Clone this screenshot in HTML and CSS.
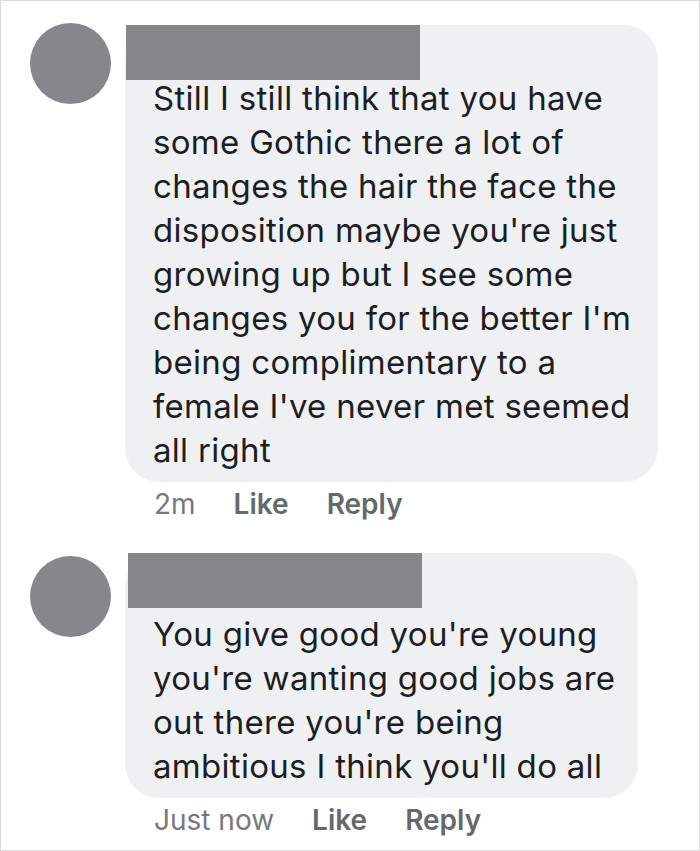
FILE: index.html
```html
<!DOCTYPE html>
<html lang="en">
<head>
    <meta charset="UTF-8">
    <meta name="viewport" content="width=device-width, initial-scale=1.0">
    <title>Comments</title>
    <link rel="stylesheet" href="styles.css">
</head>
<body>
    <div class="page">
        <div class="comment comment-first">
            <div class="avatar"></div>
            <div class="comment-body">
                <div class="bubble">
                    <div class="redact"></div>
                    <p class="text">Still I still think that you have some Gothic there a lot of changes the hair the face the disposition maybe you're just growing up but I see some changes you for the better I'm being complimentary to a female I've never met seemed all right</p>
                </div>
                <div class="actions">
                    <span class="time">2m</span>
                    <span class="link">Like</span>
                    <span class="link">Reply</span>
                </div>
            </div>
        </div>

        <div class="comment comment-second">
            <div class="avatar"></div>
            <div class="comment-body">
                <div class="bubble">
                    <div class="redact"></div>
                    <p class="text">You give good you're young you're wanting good jobs are out there you're being ambitious I think you'll do all</p>
                </div>
                <div class="actions">
                    <span class="time">Just now</span>
                    <span class="link">Like</span>
                    <span class="link">Reply</span>
                </div>
            </div>
        </div>
    </div>
</body>
</html>
```

FILE: styles.css
```css
body {
    margin: 0;
    background-color: #ffffff;
    font-family: Inter, "Liberation Sans", Arial, sans-serif;
}

.page {
    box-sizing: border-box;
    width: 700px;
    height: 851px;
    padding: 21px 0 0 29px;
    border: 1px solid #dadada;
    overflow: hidden;
}

.comment {
    display: flex;
    align-items: flex-start;
    gap: 14px;
}

.comment-second {
    margin-top: 34px;
}

.avatar {
    flex: none;
    width: 81px;
    height: 81px;
    margin-top: 1px;
    border-radius: 50%;
    background-color: #85878b;
}

.bubble {
    box-sizing: border-box;
    padding: 0 22px 10px 28px;
    border-radius: 34px;
    background-color: #eef0f2;
}

.comment-first .bubble {
    width: 533px;
}

.comment-second .bubble {
    width: 513px;
}

.redact {
    width: 294px;
    height: 55px;
    margin-left: -27px;
    background-color: #85878b;
}

.comment-first .redact {
    margin-top: 3px;
}

.comment-second .redact {
    margin-top: -2px;
    margin-left: -25px;
}

.text {
    margin: 0;
    font-size: 33px;
    line-height: 44px;
    letter-spacing: 0.3px;
    color: #1c1e21;
}

.comment-first .text {
    margin-top: -4px;
}

.comment-second .text {
    margin-top: 4px;
}

.actions {
    display: flex;
    gap: 38px;
    margin-top: 5px;
    padding-left: 29px;
    font-size: 28px;
    line-height: 34px;
}

.time {
    color: #75787d;
}

.link {
    font-weight: 600;
    color: #65686d;
}
```
